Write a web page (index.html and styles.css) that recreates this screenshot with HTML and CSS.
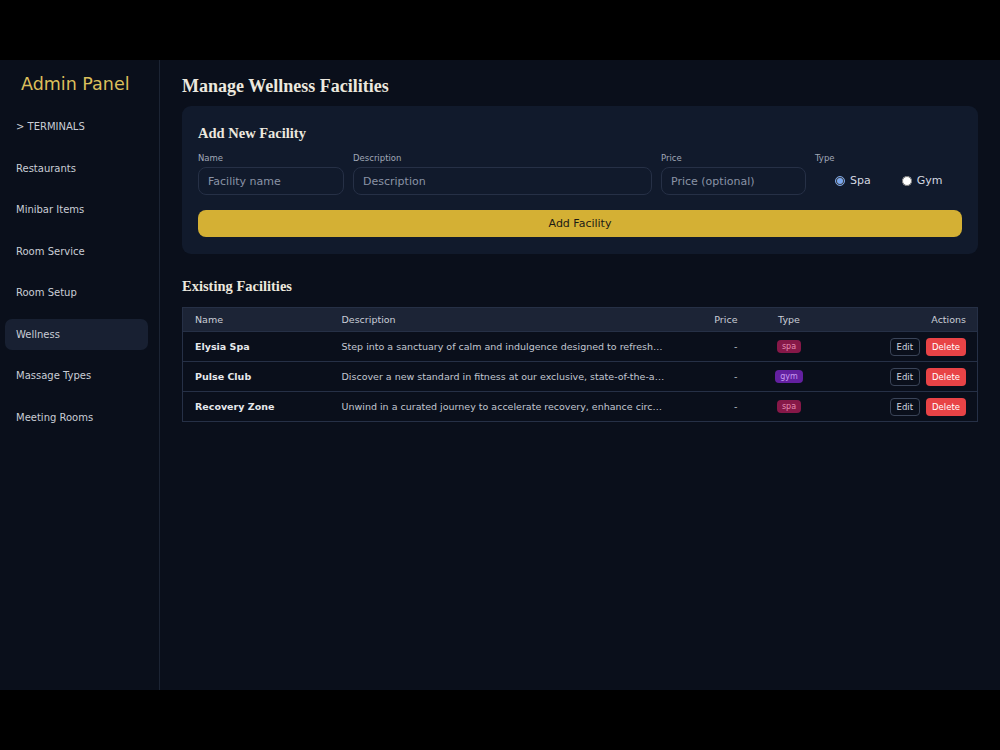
FILE: index.html
```html
<!DOCTYPE html>
<html lang="en">
<head>
  <meta charset="UTF-8">
  <meta name="viewport" content="width=device-width, initial-scale=1.0">
  <title>Admin Panel | Wellness</title>
  <link rel="stylesheet" href="styles.css">
</head>
<body>
  <div class="app">
    <aside class="sidebar">
      <div class="brand">Admin Panel</div>
      <nav class="nav">
        <a class="nav-item">&gt; TERMINALS</a>
        <a class="nav-item">Restaurants</a>
        <a class="nav-item">Minibar Items</a>
        <a class="nav-item">Room Service</a>
        <a class="nav-item">Room Setup</a>
        <a class="nav-item active">Wellness</a>
        <a class="nav-item">Massage Types</a>
        <a class="nav-item">Meeting Rooms</a>
      </nav>
    </aside>

    <main class="main">
      <h1>Manage Wellness Facilities</h1>

      <section class="card">
        <h2>Add New Facility</h2>
        <div class="form-grid">
          <div class="field">
            <label>Name</label>
            <input type="text" placeholder="Facility name">
          </div>
          <div class="field">
            <label>Description</label>
            <input type="text" placeholder="Description">
          </div>
          <div class="field">
            <label>Price</label>
            <input type="text" placeholder="Price (optional)">
          </div>
          <div class="field">
            <label>Type</label>
            <div class="radios">
              <label class="radio"><input type="radio" name="type" checked> Spa</label>
              <label class="radio"><input type="radio" name="type"> Gym</label>
            </div>
          </div>
        </div>
        <button class="btn-add">Add Facility</button>
      </section>

      <h2 class="section-title">Existing Facilities</h2>

      <table class="facilities">
        <colgroup>
          <col style="width: 147px">
          <col style="width: 346px">
          <col style="width: 73px">
          <col style="width: 80px">
          <col style="width: 149px">
        </colgroup>
        <thead>
          <tr>
            <th>Name</th>
            <th>Description</th>
            <th class="right">Price</th>
            <th class="center">Type</th>
            <th class="right">Actions</th>
          </tr>
        </thead>
        <tbody>
          <tr>
            <td class="name">Elysia Spa</td>
            <td class="desc">Step into a sanctuary of calm and indulgence designed to refresh your body and mind</td>
            <td class="right">-</td>
            <td class="center"><span class="badge spa">spa</span></td>
            <td class="right"><button class="btn-edit">Edit</button><button class="btn-delete">Delete</button></td>
          </tr>
          <tr>
            <td class="name">Pulse Club</td>
            <td class="desc">Discover a new standard in fitness at our exclusive, state-of-the-art gym</td>
            <td class="right">-</td>
            <td class="center"><span class="badge gym">gym</span></td>
            <td class="right"><button class="btn-edit">Edit</button><button class="btn-delete">Delete</button></td>
          </tr>
          <tr>
            <td class="name">Recovery Zone</td>
            <td class="desc">Unwind in a curated journey to accelerate recovery, enhance circulation and restore balance</td>
            <td class="right">-</td>
            <td class="center"><span class="badge spa">spa</span></td>
            <td class="right"><button class="btn-edit">Edit</button><button class="btn-delete">Delete</button></td>
          </tr>
        </tbody>
      </table>
    </main>
  </div>
</body>
</html>
```

FILE: styles.css
```css
* {
  box-sizing: border-box;
}
body {
  margin: 0;
  background: #000;
  font-family: 'DejaVu Sans', sans-serif;
  color: #d4d8e0;
}
.app {
  margin-top: 60px;
  height: 630px;
  display: flex;
  background: #0a0f1b;
}
.sidebar {
  width: 160px;
  border-right: 1px solid #1c2434;
  padding: 13px 11px 0 5px;
}
.brand {
  font-size: 17.5px;
  line-height: 22px;
  color: #dcbf5c;
  padding-left: 16px;
  margin-bottom: 16px;
}
.nav {
  display: flex;
  flex-direction: column;
  gap: 10.5px;
}
.nav-item {
  display: block;
  height: 31px;
  line-height: 31px;
  padding-left: 11px;
  border-radius: 7px;
  font-size: 10px;
  color: #c9cdd6;
  cursor: pointer;
}
.nav-item.active {
  background: #182032;
}
.main {
  flex: 1;
  padding: 14px 22px 0 22px;
}
h1, h2 {
  font-family: 'Liberation Serif', serif;
  font-weight: bold;
  color: #ece8df;
  margin: 0;
}
h1 {
  font-size: 18px;
  line-height: 24px;
  margin-bottom: 8px;
}
.card {
  background: #111a2c;
  border-radius: 9px;
  padding: 18px 16px 17px 16px;
}
.card h2 {
  font-size: 14.5px;
  line-height: 18px;
  margin-bottom: 10px;
}
.form-grid {
  display: grid;
  grid-template-columns: 146px 299px 145px 146px;
  gap: 9px;
}
.field label {
  display: block;
  font-size: 8.5px;
  line-height: 12px;
  color: #a0a7b6;
  margin-bottom: 3px;
}
.field input[type=text] {
  width: 100%;
  height: 28px;
  background: #111a2c;
  border: 1px solid #263046;
  border-radius: 8px;
  padding: 0 9px;
  font-family: inherit;
  font-size: 11px;
  color: #d4d8e0;
}
.field input::placeholder {
  color: #8a93a6;
}
.radios {
  height: 28px;
  display: flex;
  align-items: center;
  gap: 31px;
  padding-left: 20px;
}
.field .radio {
  display: flex;
  align-items: center;
  gap: 5px;
  margin: 0;
  font-size: 11px;
  line-height: 14px;
  color: #d4d8e0;
}
.radio input {
  width: 10px;
  height: 10px;
  margin: 0;
  accent-color: #7aa7ee;
}
.btn-add {
  display: block;
  width: 100%;
  height: 27px;
  margin-top: 15px;
  background: #d4b034;
  border: none;
  border-radius: 8px;
  font-family: inherit;
  font-size: 11px;
  color: #1c1a14;
  cursor: pointer;
}
.section-title {
  font-size: 14.5px;
  line-height: 18px;
  margin-top: 23px;
  margin-bottom: 12px;
}
.facilities {
  width: 795px;
  table-layout: fixed;
  border-collapse: collapse;
  border: 1px solid #263046;
  font-size: 9.5px;
}
.facilities th {
  background: #1c2436;
  height: 24px;
  padding: 0 11px 0 12px;
  text-align: left;
  font-weight: normal;
  color: #c9cdd6;
  font-size: 9.5px;
}
.facilities td {
  height: 30px;
  padding: 0 11px 0 12px;
  border-top: 1px solid #263046;
  color: #c2c7d1;
  white-space: nowrap;
  overflow: hidden;
  text-overflow: ellipsis;
}
.facilities td.name {
  font-weight: bold;
  color: #e6e8ec;
}
.right {
  text-align: right !important;
}
.center {
  text-align: center !important;
}
.badge {
  display: inline-block;
  padding: 1px 5px;
  border-radius: 4px;
  font-size: 8px;
  line-height: 11px;
}
.badge.spa {
  background: #861848;
  color: #e58bb0;
}
.badge.gym {
  background: #6320a0;
  color: #c79af0;
}
.btn-edit, .btn-delete {
  height: 18px;
  border-radius: 4px;
  font-family: inherit;
  font-size: 8.5px;
  padding: 0 6px;
  cursor: pointer;
  vertical-align: middle;
}
.btn-edit {
  background: transparent;
  border: 1px solid #3a4458;
  color: #d4d8e0;
}
.btn-delete {
  background: #e84346;
  border: none;
  color: #fff;
  margin-left: 6px;
}
```
